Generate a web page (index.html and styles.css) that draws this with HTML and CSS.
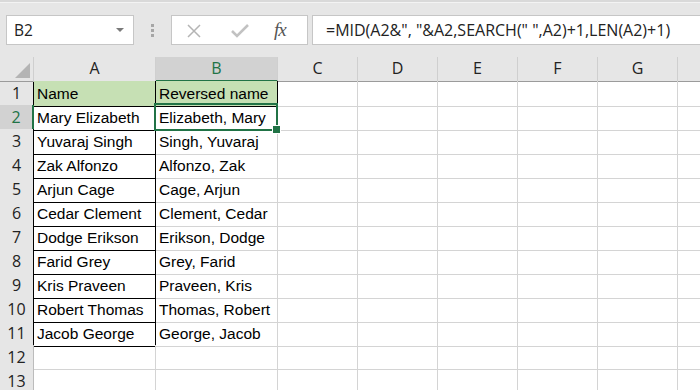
FILE: index.html
```html
<!DOCTYPE html>
<html>
<head>
    <title>Reversed names</title>
    <link rel="stylesheet" href="styles.css">
</head>
<body>
    <div class="toolbar">
        <div class="namebox">
            <span>B2</span>
            <span class="caret"></span>
        </div>
        <div class="grip"><i></i><i></i><i></i></div>
        <div class="fxbtns">
            <svg class="icon-x" width="16" height="16" viewBox="0 0 16 16">
                <path d="M2 2 L14 14 M14 2 L2 14" stroke="#b4b4b4" stroke-width="1.5" fill="none"/>
            </svg>
            <svg class="icon-ok" width="20" height="16" viewBox="0 0 20 16">
                <path d="M2 8 L7 13 L18 2" stroke="#c2c2c2" stroke-width="2.6" fill="none"/>
            </svg>
            <span class="fx">fx</span>
        </div>
        <div class="formula">=MID(A2&amp;", "&amp;A2,SEARCH(" ",A2)+1,LEN(A2)+1)</div>
    </div>

    <div class="sheet">
        <div class="row head">
            <div class="corner"><span></span></div>
            <div class="ch">A</div>
            <div class="ch sel">B</div>
            <div class="ch">C</div>
            <div class="ch">D</div>
            <div class="ch">E</div>
            <div class="ch">F</div>
            <div class="ch">G</div>
            <div class="ch"></div>
        </div>
        <div class="row">
            <div class="rh edge">1</div>
            <div class="c bx title">Name</div>
            <div class="c bx title">Reversed name</div>
            <div class="c"></div><div class="c"></div><div class="c"></div><div class="c"></div><div class="c"></div><div class="c"></div>
        </div>
        <div class="row">
            <div class="rh sel">2</div>
            <div class="c bx">Mary Elizabeth</div>
            <div class="c active">Elizabeth, Mary</div>
            <div class="c"></div><div class="c"></div><div class="c"></div><div class="c"></div><div class="c"></div><div class="c"></div>
        </div>
        <div class="row">
            <div class="rh edge">3</div>
            <div class="c bx">Yuvaraj Singh</div>
            <div class="c">Singh, Yuvaraj</div>
            <div class="c"></div><div class="c"></div><div class="c"></div><div class="c"></div><div class="c"></div><div class="c"></div>
        </div>
        <div class="row">
            <div class="rh edge">4</div>
            <div class="c bx">Zak Alfonzo</div>
            <div class="c">Alfonzo, Zak</div>
            <div class="c"></div><div class="c"></div><div class="c"></div><div class="c"></div><div class="c"></div><div class="c"></div>
        </div>
        <div class="row">
            <div class="rh edge">5</div>
            <div class="c bx">Arjun Cage</div>
            <div class="c">Cage, Arjun</div>
            <div class="c"></div><div class="c"></div><div class="c"></div><div class="c"></div><div class="c"></div><div class="c"></div>
        </div>
        <div class="row">
            <div class="rh edge">6</div>
            <div class="c bx">Cedar Clement</div>
            <div class="c">Clement, Cedar</div>
            <div class="c"></div><div class="c"></div><div class="c"></div><div class="c"></div><div class="c"></div><div class="c"></div>
        </div>
        <div class="row">
            <div class="rh edge">7</div>
            <div class="c bx">Dodge Erikson</div>
            <div class="c">Erikson, Dodge</div>
            <div class="c"></div><div class="c"></div><div class="c"></div><div class="c"></div><div class="c"></div><div class="c"></div>
        </div>
        <div class="row">
            <div class="rh edge">8</div>
            <div class="c bx">Farid Grey</div>
            <div class="c">Grey, Farid</div>
            <div class="c"></div><div class="c"></div><div class="c"></div><div class="c"></div><div class="c"></div><div class="c"></div>
        </div>
        <div class="row">
            <div class="rh edge">9</div>
            <div class="c bx">Kris Praveen</div>
            <div class="c">Praveen, Kris</div>
            <div class="c"></div><div class="c"></div><div class="c"></div><div class="c"></div><div class="c"></div><div class="c"></div>
        </div>
        <div class="row">
            <div class="rh edge">10</div>
            <div class="c bx">Robert Thomas</div>
            <div class="c">Thomas, Robert</div>
            <div class="c"></div><div class="c"></div><div class="c"></div><div class="c"></div><div class="c"></div><div class="c"></div>
        </div>
        <div class="row">
            <div class="rh edge">11</div>
            <div class="c bx">Jacob George</div>
            <div class="c">George, Jacob</div>
            <div class="c"></div><div class="c"></div><div class="c"></div><div class="c"></div><div class="c"></div><div class="c"></div>
        </div>
        <div class="row">
            <div class="rh">12</div>
            <div class="c"></div><div class="c"></div>
            <div class="c"></div><div class="c"></div><div class="c"></div><div class="c"></div><div class="c"></div><div class="c"></div>
        </div>
        <div class="row">
            <div class="rh">13</div>
            <div class="c"></div><div class="c"></div>
            <div class="c"></div><div class="c"></div><div class="c"></div><div class="c"></div><div class="c"></div><div class="c"></div>
        </div>
    </div>
</body>
</html>
```

FILE: styles.css
```css
* {
    box-sizing: border-box;
}
body {
    margin: 0;
    width: 700px;
    height: 390px;
    overflow: hidden;
    background: #fff;
    font-family: "Liberation Sans", Arial, sans-serif;
}

/* formula bar */
.toolbar {
    height: 57px;
    background: #e6e6e6;
    border-top: 2px solid #d9d9d9;
    box-shadow: inset 0 1px 0 #f3f3f3;
    display: flex;
    align-items: flex-start;
    padding-top: 13px;
}
.namebox {
    margin-left: 6px;
    width: 128px;
    height: 30px;
    background: #fff;
    border: 1px solid #c6c6c6;
    display: flex;
    align-items: center;
    justify-content: space-between;
    padding: 0 9px 0 7px;
    font-family: "Open Sans", sans-serif;
    font-size: 15.5px;
    color: #222;
}
.caret {
    width: 0;
    height: 0;
    border-left: 4px solid transparent;
    border-right: 4px solid transparent;
    border-top: 4px solid #7a7a7a;
}
.grip {
    width: 37px;
    height: 30px;
    display: flex;
    flex-direction: column;
    align-items: center;
    justify-content: center;
    gap: 2px;
}
.grip i {
    display: block;
    width: 3px;
    height: 3px;
    background: #a6a6a6;
}
.fxbtns {
    width: 137px;
    height: 30px;
    background: #fff;
    border: 1px solid #c6c6c6;
    display: flex;
    align-items: center;
    padding-left: 14px;
}
.icon-x {
    margin-top: 1px;
}
.icon-ok {
    margin-left: 28px;
    margin-top: 2px;
}
.fx {
    margin-left: 24px;
    font-family: "Liberation Serif", serif;
    font-style: italic;
    font-size: 19px;
    color: #555;
    letter-spacing: -1px;
}
.formula {
    margin-left: 4px;
    flex: 1;
    height: 30px;
    background: #fff;
    border: 1px solid #c6c6c6;
    border-right: none;
    padding-left: 13px;
    line-height: 28px;
    font-family: "Open Sans", sans-serif;
    font-size: 16px;
    color: #222;
    white-space: nowrap;
}

/* grid */
.sheet {
    background: #fff;
}
.row {
    display: grid;
    grid-template-columns: 34px 122px 122px 80px 80px 80px 80px 80px 80px;
    height: 24px;
}
.head {
    background: #e6e6e6;
}
.corner {
    border-right: 1px solid #cfcfcf;
    border-bottom: 1px solid #9b9b9b;
    position: relative;
}
.corner span {
    position: absolute;
    right: 3px;
    bottom: 3px;
    width: 0;
    height: 0;
    border-left: 15px solid transparent;
    border-bottom: 15px solid #b4b4b4;
}
.ch {
    border-right: 1px solid #cfcfcf;
    border-bottom: 1px solid #9b9b9b;
    text-align: center;
    line-height: 23px;
    font-family: "Open Sans", sans-serif;
    font-size: 16px;
    color: #222;
}
.ch.sel {
    background: #d2d2d2;
    color: #217346;
    border-bottom: 2px solid #217346;
}
.rh {
    background: #e6e6e6;
    border-right: 1px solid #bcbcbc;
    border-bottom: 1px solid #cfcfcf;
    text-align: center;
    line-height: 24px;
    font-family: "Open Sans", sans-serif;
    font-size: 16px;
    color: #222;
}
.rh.edge {
    border-right-color: #000;
}
.rh.sel {
    background: #d2d2d2;
    color: #217346;
    border-right: 2px solid #217346;
}
.c {
    border-right: 1px solid #d4d4d4;
    border-bottom: 1px solid #d4d4d4;
    padding: 0 3px;
    font-size: 15.5px;
    line-height: 25px;
    color: #000;
    white-space: nowrap;
}
.c.bx {
    border-right-color: #000;
    border-bottom-color: #000;
}
.c.title {
    background: #c6e0b4;
}
.c.active {
    position: relative;
}
.c.active::before {
    content: "";
    position: absolute;
    top: -2px;
    left: -2px;
    right: -1px;
    bottom: -1px;
    border: 2px solid #217346;
}
.c.active::after {
    content: "";
    position: absolute;
    right: -4px;
    bottom: -4px;
    width: 7px;
    height: 7px;
    background: #217346;
    border: 1px solid #fff;
}
```
